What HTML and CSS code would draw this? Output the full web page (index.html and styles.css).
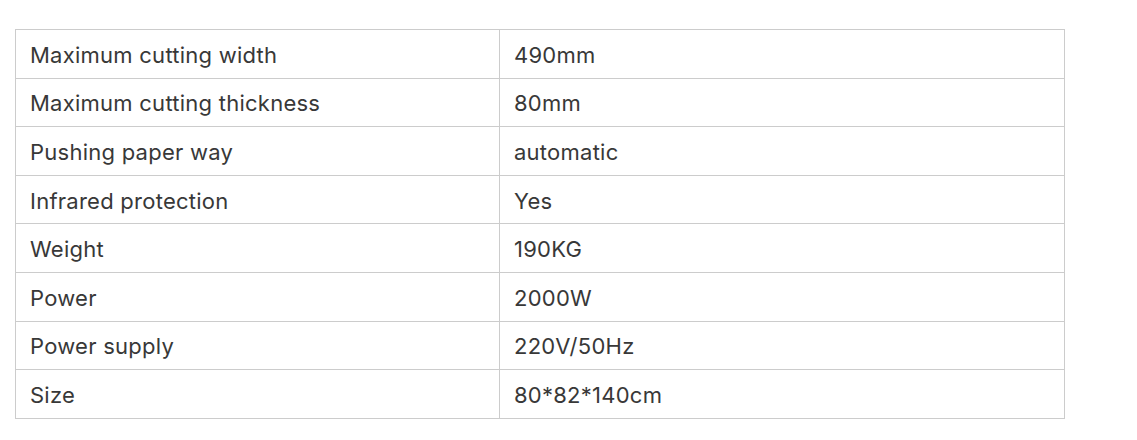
FILE: index.html
```html
<!DOCTYPE html>
<html lang="en">
<head>
<meta charset="utf-8">
<link rel="stylesheet" href="styles.css">
<title>Specs</title>
</head>
<body>
<table class="spec-table">
  <colgroup><col class="col-key"><col class="col-val"></colgroup>
  <tbody>
    <tr><td>Maximum cutting width</td><td>490mm</td></tr>
    <tr><td>Maximum cutting thickness</td><td>80mm</td></tr>
    <tr><td>Pushing paper way</td><td>automatic</td></tr>
    <tr><td>Infrared protection</td><td>Yes</td></tr>
    <tr><td>Weight</td><td>190KG</td></tr>
    <tr><td>Power</td><td>2000W</td></tr>
    <tr><td>Power supply</td><td>220V/50Hz</td></tr>
    <tr><td>Size</td><td>80*82*140cm</td></tr>
  </tbody>
</table>
</body>
</html>
```
FILE: styles.css
```css
html, body { background: #fff; }
body {
  margin: 0;
  padding: 29px 0 0 15px;
  font-family: Inter, "Noto Sans", sans-serif;
  color: #383838;
}
.spec-table {
  border-collapse: collapse;
  width: 1050px;
  table-layout: fixed;
}
.col-key { width: 484px; }
.spec-table td {
  border: 1px solid #ccc;
  height: 48.6px;
  box-sizing: border-box;
  padding: 2px 14px 0;
  font-size: 22px;
  line-height: 26px;
  font-weight: 400;
  vertical-align: middle;
  letter-spacing: 0.25px;
}
```
